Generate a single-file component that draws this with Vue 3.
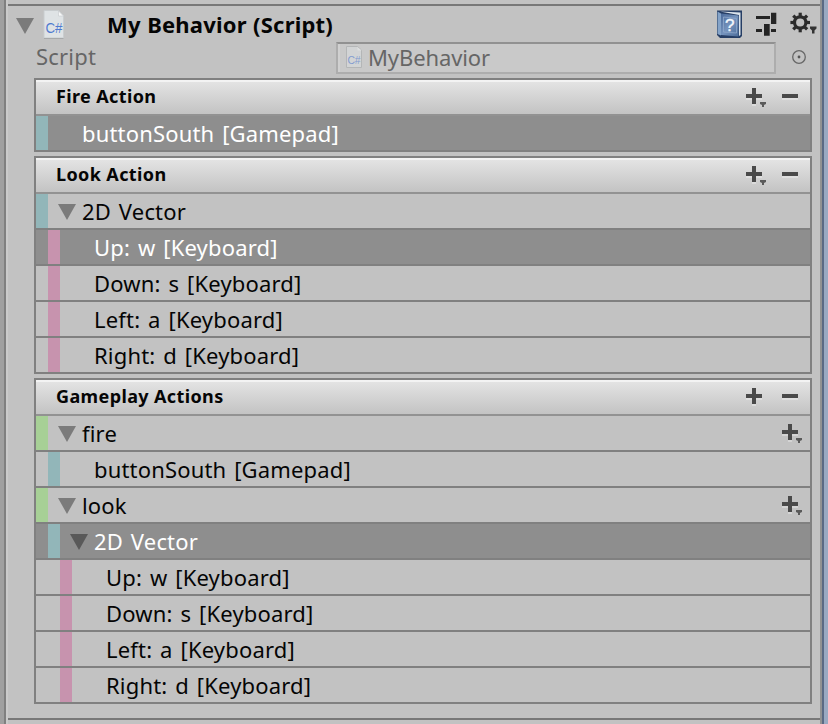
<script setup>
import { h } from 'vue'

const groups = [
  {
    title: 'Fire Action', menu: true,
    rows: [{ text: 'buttonSouth [Gamepad]', level: 0, tint: 'teal', selected: true }],
  },
  {
    title: 'Look Action', menu: true,
    rows: [
      { text: '2D Vector', level: 0, tint: 'teal', fold: true },
      { text: 'Up: w [Keyboard]', level: 1, tint: 'pink', selected: true },
      { text: 'Down: s [Keyboard]', level: 1, tint: 'pink' },
      { text: 'Left: a [Keyboard]', level: 1, tint: 'pink' },
      { text: 'Right: d [Keyboard]', level: 1, tint: 'pink' },
    ],
  },
  {
    title: 'Gameplay Actions', menu: false,
    rows: [
      { text: 'fire', level: 0, tint: 'green', fold: true, add: true },
      { text: 'buttonSouth [Gamepad]', level: 1, tint: 'teal' },
      { text: 'look', level: 0, tint: 'green', fold: true, add: true },
      { text: '2D Vector', level: 1, tint: 'teal', fold: true, selected: true },
      { text: 'Up: w [Keyboard]', level: 2, tint: 'pink' },
      { text: 'Down: s [Keyboard]', level: 2, tint: 'pink' },
      { text: 'Left: a [Keyboard]', level: 2, tint: 'pink' },
      { text: 'Right: d [Keyboard]', level: 2, tint: 'pink' },
    ],
  },
]

const PlusIcon = (props) =>
  h('svg', { width: 22, height: 22, viewBox: '0 0 22 22' }, [
    h('path', { d: 'M0 10h6v2H0zM10 10h6v2h-6zM6 16h4v2H6z', fill: '#fff', opacity: 0.3 }),
    h('path', { d: 'M6 0h4v6h6v4h-6v6H6v-6H0V6h6z', fill: '#4a4a4a' }),
    props.menu ? h('path', { d: 'M14 14h6v2l-2 1v2h-2v-2l-2-1z', fill: '#5a5a5a' }) : null,
  ])
PlusIcon.props = ['menu']
</script>

<template>
  <div class="window">
    <div class="gutter"></div>
    <main class="inspector">
      <header class="component">
        <svg class="fold" width="18" height="16" viewBox="0 0 18 16"><path d="M0 0h18L9 16z" /></svg>
        <svg class="script-icon" width="22" height="30" viewBox="0 0 22 30">
          <path d="M1 .5h14.500L20.500 6v22H1z" fill="#dfe3e5" stroke="#c9cdcf" />
          <path d="M1 28.500h19.500" stroke="#a7a9aa" />
          <path d="M15.500 1v5h5z" fill="#f7f8f8" stroke="#c6cacc" stroke-width=".6" />
          <text x="2.500" y="23" textLength="17" lengthAdjust="spacingAndGlyphs">C#</text>
        </svg>
        <h1>My Behavior (Script)</h1>
        <div class="tools">
          <svg width="28" height="30" viewBox="0 0 28 30">
            <defs>
              <linearGradient id="cover" x1="0" y1="0" x2="1" y2="1">
                <stop offset="0" stop-color="#4a6a9a" /><stop offset=".5" stop-color="#7593bd" /><stop offset="1" stop-color="#4d6d9a" />
              </linearGradient>
            </defs>
            <path d="M1 .5h25V26l-2 2H4l-3-3z" fill="#263e65" />
            <path d="M4 1.500l20.500 1V25l-1.500 1V5z" fill="#dce4ec" />
            <path d="M1.500 1.500L5 3.500v22l-3.500-1.500z" fill="#84a3c8" />
            <path d="M5 3.500l17.500 2v21L5 25z" fill="url(#cover)" />
            <path d="M7.500 7l13 1.500v14.500L7.500 22z" fill="none" stroke="#8fa8ca" stroke-width=".8" />
            <text x="9" y="21" class="question">?</text>
          </svg>
          <svg width="22" height="26" viewBox="0 0 22 26">
            <path d="M0 4h14v3H0zM15 .700h5.300V12H15zM0 17h6v3H0zM8 12h5.700v11.800H8zM15 17h5v3h-5z" fill="#242424" />
          </svg>
          <svg width="28" height="26" viewBox="0 0 28 26">
            <g transform="translate(10.200 10.500)" fill="none" stroke="#2c2c2c">
              <circle r="5.700" stroke-width="3.200" />
              <path v-for="a in 8" :key="a" d="M0-6.500V-9.800" stroke-width="3.200" :transform="`rotate(${a * 45})`" />
            </g>
            <path d="M20 14.500h6.500v2l-2 2v3h-2.500v-3l-2-2z" fill="#333" />
          </svg>
        </div>
      </header>

      <div class="script-row">
        <span class="label">Script</span>
        <div class="field">
          <svg width="16" height="22" viewBox="0 0 16 22">
            <path d="M.5 .5h11L15.500 4v17.500H.5z" fill="#d2d4d5" stroke="#b4b6b7" />
            <path d="M11.500 1v3.500h4z" fill="#dedfe0" />
            <text x="1.500" y="17.500" class="mini" textLength="13" lengthAdjust="spacingAndGlyphs">C#</text>
          </svg>
          <span>MyBehavior</span>
        </div>
        <svg class="picker" width="16" height="16" viewBox="0 0 16 16">
          <circle cx="8" cy="8" r="6.300" fill="none" stroke="#666" stroke-width="1.300" />
          <circle cx="8" cy="8" r="1.400" fill="#555" />
        </svg>
      </div>

      <div class="groups">
        <section v-for="group in groups" :key="group.title" class="group">
          <div class="group-head">
            <h2>{{ group.title }}</h2>
            <PlusIcon :menu="group.menu" class="plus" />
            <svg class="minus" width="16" height="22" viewBox="0 0 16 22">
              <path d="M0 10h16v2H0z" fill="#fff" opacity=".3" /><path d="M0 6h16v4H0z" fill="#4a4a4a" />
            </svg>
          </div>
          <div
            v-for="(row, i) in group.rows" :key="i"
            class="row" :class="['level' + row.level, { selected: row.selected }]"
          >
            <i class="tint" :class="row.tint"></i>
            <span class="fold-slot">
              <svg v-if="row.fold" width="18" height="16" viewBox="0 0 18 16"><path d="M0 0h18L9 16z" /></svg>
            </span>
            <span class="row-text">{{ row.text }}</span>
            <PlusIcon v-if="row.add" :menu="true" class="row-plus" />
          </div>
        </section>
      </div>
    </main>
    <div class="edge"></div>
  </div>
</template>

<style>
body { margin: 0; overflow: hidden; }
</style>

<style scoped>
.window {
  display: flex;
  width: 828px;
  height: 724px;
  overflow: hidden;
  background: #c2c2c2;
  color: #050505;
  font-family: "Noto Sans", "Open Sans", sans-serif;
  font-size: 22px;
}
.window svg { display: block; flex: none; }
.gutter { box-sizing: border-box; width: 8px; background: #a0a0a0; border-right: 2px solid #cbcbcb; box-shadow: inset -2px 0 #808080; }
.edge { box-sizing: border-box; width: 8px; background: #9aa9c1; border-left: 2px solid #929292; box-shadow: inset 2px 0 #5b6a84; }
.inspector { box-sizing: border-box; width: 812px; height: 716px; margin-top: 4px; border-top: 2px solid #787878; border-bottom: 2px solid #787878; }
.component { display: flex; height: 36px; padding-left: 8px; }
.fold { margin-top: 12px; }
.fold path, .fold-slot path { fill: #7b7b7b; }
.script-icon { margin: 4px 0 0 9px; }
.script-icon text { font: 14px "Liberation Sans", sans-serif; fill: #4f7bd0; }
h1 { width: 609px; margin: 0 0 0 42px; font-size: 22px; line-height: 36px; letter-spacing: .2px; word-spacing: .5px; white-space: nowrap; }
.tools { display: flex; gap: 12px; margin-top: 4px; }
.tools svg + svg { margin-top: 2px; }
.question { font: 17px "Liberation Sans", sans-serif; fill: #f4f8fc; stroke: #f4f8fc; stroke-width: .4; }
.script-row { display: flex; height: 32px; padding-left: 28px; color: #666; }
.label { width: 300px; line-height: 28px; letter-spacing: .2px; }
.field { box-sizing: border-box; display: flex; gap: 6px; width: 440px; height: 32px; padding: 2px 0 0 8px; border: 2px solid #adadad; border-top-color: #919191; background: #c9c9c9; box-shadow: inset 2px 0 #d0d0d0; line-height: 22px; letter-spacing: -.1px; }
.mini { font: 11px "Liberation Sans", sans-serif; fill: #829bd0; }
.picker { margin: 7px 0 0 15px; }
.groups { display: flex; flex-direction: column; gap: 4px; padding: 4px 0 0 26px; }
.group { box-sizing: border-box; width: 778px; border: 2px solid #808080; }
.group-head { box-sizing: border-box; display: flex; height: 34px; border-top: 2px solid #f3f3f3; background: linear-gradient(#e3e3e3, #c3c3c3); }
h2 { flex: 1; margin: 0; padding-left: 20px; font-size: 18px; line-height: 28px; letter-spacing: .38px; }
.plus { margin: 6px 14px 0 0; }
.minus { margin: 6px 12px 0 0; }
.row { display: flex; height: 34px; border-top: 2px solid #808080; line-height: 34px; }
.group-head + .row { border-top-color: #929292; }
.level1 { padding-left: 12px; }
.level2 { padding-left: 24px; }
.selected { background: #8e8e8e; color: #fff; }
.tint { width: 12px; }
.teal { background: #92b6b9; }
.pink { background: #c793ae; }
.green { background: #a7d096; }
.fold-slot { width: 34px; }
.fold-slot svg { margin: 10px 0 0 10px; }
.selected .fold-slot path { fill: #595959; }
.row-text { flex: 1; white-space: nowrap; letter-spacing: .17px; word-spacing: 2px; }
.row-plus { margin: 8px 6px 0 0; }
</style>
